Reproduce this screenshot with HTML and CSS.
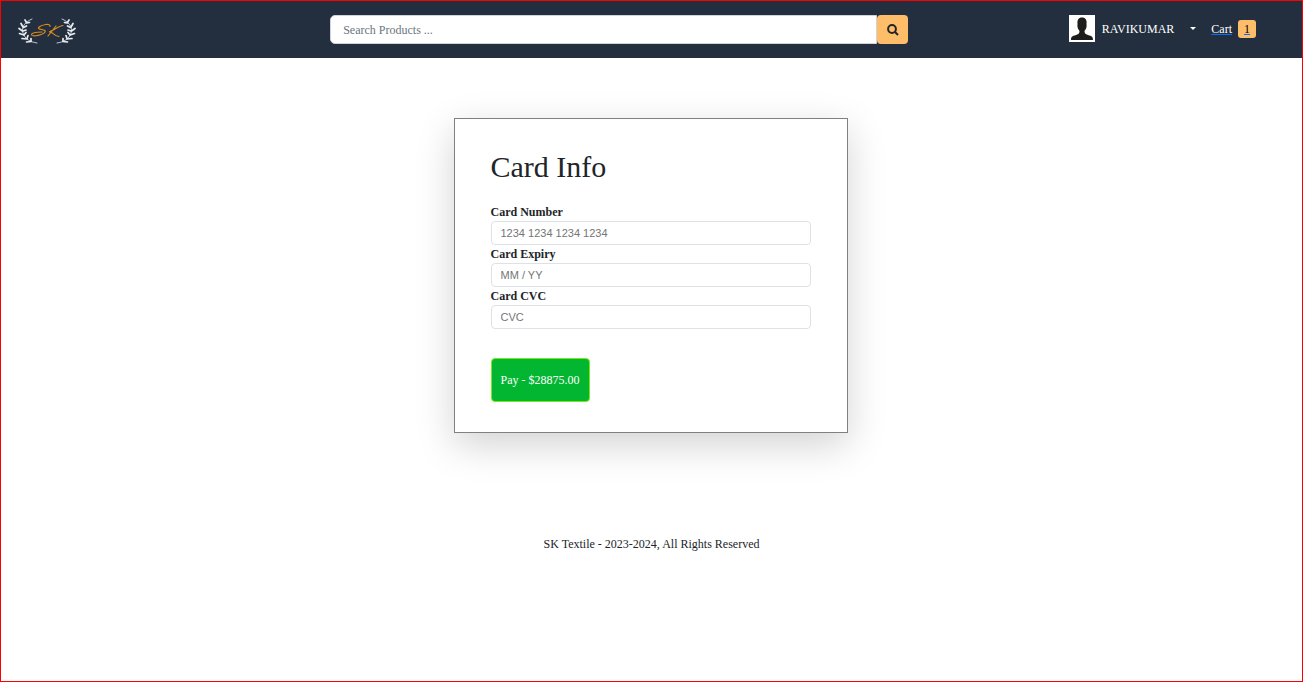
FILE: index.html
```html
<!DOCTYPE html>
<html lang="en">
<head>
<meta charset="utf-8">
<meta name="viewport" content="width=device-width, initial-scale=1">
<title>SK Textile - Payment</title>
<link rel="stylesheet" href="styles.css">
</head>
<body>
<nav class="navbar">
  <a class="brand" href="#" aria-label="SK Textile home">
    <svg class="brand-logo" viewBox="0 0 60 30" aria-hidden="true">
      <defs>
        <g id="laurel" fill="none" stroke="#e8edf2" stroke-linecap="round">
          <path stroke-width="0.8" d="M15 4C8 7 4 12 6 18C8 24 13 27 20 28"/>
          <path stroke-width="1.7" d="M9.500 7.500L8 5M9.500 8L12.500 7.500M6 12L4 8.500M6.500 12.500L9.500 11M5.500 16L2 13.500M6 16L9 15M7 20L2.500 18.500M7 20L9 17.500M10 24L5 23.500M10 23.500L11 20.500M14 26.500L9.500 27M14 26L14 23.500"/>
        </g>
      </defs>
      <use href="#laurel"/>
      <use href="#laurel" transform="translate(60 0) scale(-1 1)"/>
      <g fill="none" stroke="#d98a1f" stroke-width="1.200" stroke-linecap="round">
        <path d="M33 11.500C34 8 25 9.500 22 12C19 15 30 14 28 17C26 20 16 22 14.500 20C14 18 19 17 25 17"/>
        <path d="M39 11L31 21M46 10.500C42 11 37 15 32 17C36 16 36 21 42 21.500"/>
      </g>
    </svg>
  </a>
  <form class="search" role="search">
    <input class="search-input" type="search" placeholder="Search Products ..." aria-label="Search products">
    <button class="search-button" type="button" aria-label="Search">
      <svg class="search-icon" viewBox="0 0 12 12" aria-hidden="true"><circle cx="5" cy="5" r="3.900"/><path d="M8 8L11 11"/></svg>
    </button>
  </form>
  <div class="account">
    <button class="user" type="button">
      <svg class="avatar" viewBox="0 0 26 27" aria-hidden="true">
        <path fill="#fff" d="M0 0H26V27H0Z"/>
        <path fill="#1d1d1b" d="M13 2.500C16.500 2.500 18 5 17.500 9C18 12 17 14 15.500 16C15.500 18 16 19 19 20C23 21 24 22 24 25H2C2 22 3 21 7 20C10 19 10.500 18 10.500 16C9 14 8 12 8.500 9C8 5 9.500 2.500 13 2.500Z"/>
      </svg>
      <span>RAVIKUMAR</span>
      <span class="caret"></span>
    </button>
    <a class="cart" href="#"><span class="cart-label">Cart</span><span class="cart-count">1</span></a>
  </div>
</nav>
<main class="content">
  <form class="card">
    <h1 class="card-title">Card Info</h1>
    <label class="label" for="number">Card Number</label>
    <input class="field" id="number" type="text" placeholder="1234 1234 1234 1234">
    <label class="label" for="expiry">Card Expiry</label>
    <input class="field" id="expiry" type="text" placeholder="MM / YY">
    <label class="label" for="cvc">Card CVC</label>
    <input class="field" id="cvc" type="text" placeholder="CVC">
    <button class="pay" type="button">Pay - $28875.00</button>
  </form>
</main>
<footer class="footer">SK Textile - 2023-2024, All Rights Reserved</footer>
</body>
</html>
```
FILE: styles.css
```css
* { box-sizing: border-box; }

body {
  margin: 0;
  min-height: 100vh;
  border: 1px solid #f00;
  background: #fff;
  color: #212529;
  font: 12px/18px "Liberation Serif", "Times New Roman", serif;
}

button, input { font: inherit; }

.navbar {
  display: grid;
  grid-template-columns: 5fr minmax(0, 578px) 6fr;
  align-items: start;
  padding: 14px 18px 13px 16px;
  background: #232f3e;
}

.brand { justify-self: start; display: block; height: 30px; }
.brand-logo { display: block; width: 60px; height: 30px; }

.search { display: flex; height: 29px; }

.search-input {
  flex: 1;
  min-width: 0;
  padding: 0 12px;
  border: 1px solid #ced4da;
  border-radius: 5px 0 0 5px;
  background: #fff;
  color: #212529;
}
.search-input::placeholder { color: #6c757d; opacity: 1; }

.search-button {
  display: grid;
  place-items: center;
  width: 31px;
  padding: 0;
  border: 0;
  border-radius: 4px;
  background: #febd69;
}
.search-icon {
  width: 12px;
  height: 12px;
  fill: none;
  stroke: #212529;
  stroke-width: 2;
}

.account {
  display: flex;
  justify-self: end;
  align-items: center;
  gap: 15px;
  padding-right: 28px;
}

.user {
  display: flex;
  align-items: center;
  gap: 7px;
  padding: 0;
  border: 0;
  background: none;
  color: #fff;
}
.avatar { width: 26px; height: 27px; }
.caret {
  margin-left: 9px;
  border: 3px solid transparent;
  border-top-color: #fff;
  border-bottom: 0;
}

.cart {
  display: flex;
  align-items: center;
  gap: 6px;
  color: #0d6efd;
  text-decoration: none;
}
.cart-label { text-decoration: underline #0d6efd; color: #fff; }
.cart-count {
  padding: 0 6px;
  border-radius: 3px;
  background: #febd69;
  color: #000;
  text-decoration: underline #0d6efd;
}

.content {
  display: flex;
  justify-content: center;
  padding: 60px 14px 102px 12px;
}

.card {
  width: 100%;
  max-width: 394px;
  padding: 30px 36px;
  border: 1px solid #808080;
  background: #fff;
  box-shadow: 0 12px 36px rgba(0, 0, 0, 0.175);
}
.card-title {
  margin: 0 0 18px;
  font-size: 30px;
  font-weight: 400;
  line-height: 36px;
}

.label { display: block; font-weight: 700; }

.field {
  display: block;
  width: 100%;
  height: 24px;
  padding: 0 9px;
  border: 1px solid #dee2e6;
  border-radius: 4px;
  background: #fff;
  color: #212529;
  font: 11px "Liberation Sans", Arial, sans-serif;
}
.field::placeholder { color: #757575; opacity: 1; }

.pay {
  display: block;
  height: 44px;
  margin-top: 29px;
  padding: 0 9px;
  border: 1px solid #7fe817;
  border-radius: 4px;
  background: #02b632;
  color: #fff;
}

.footer { text-align: center; }
```
